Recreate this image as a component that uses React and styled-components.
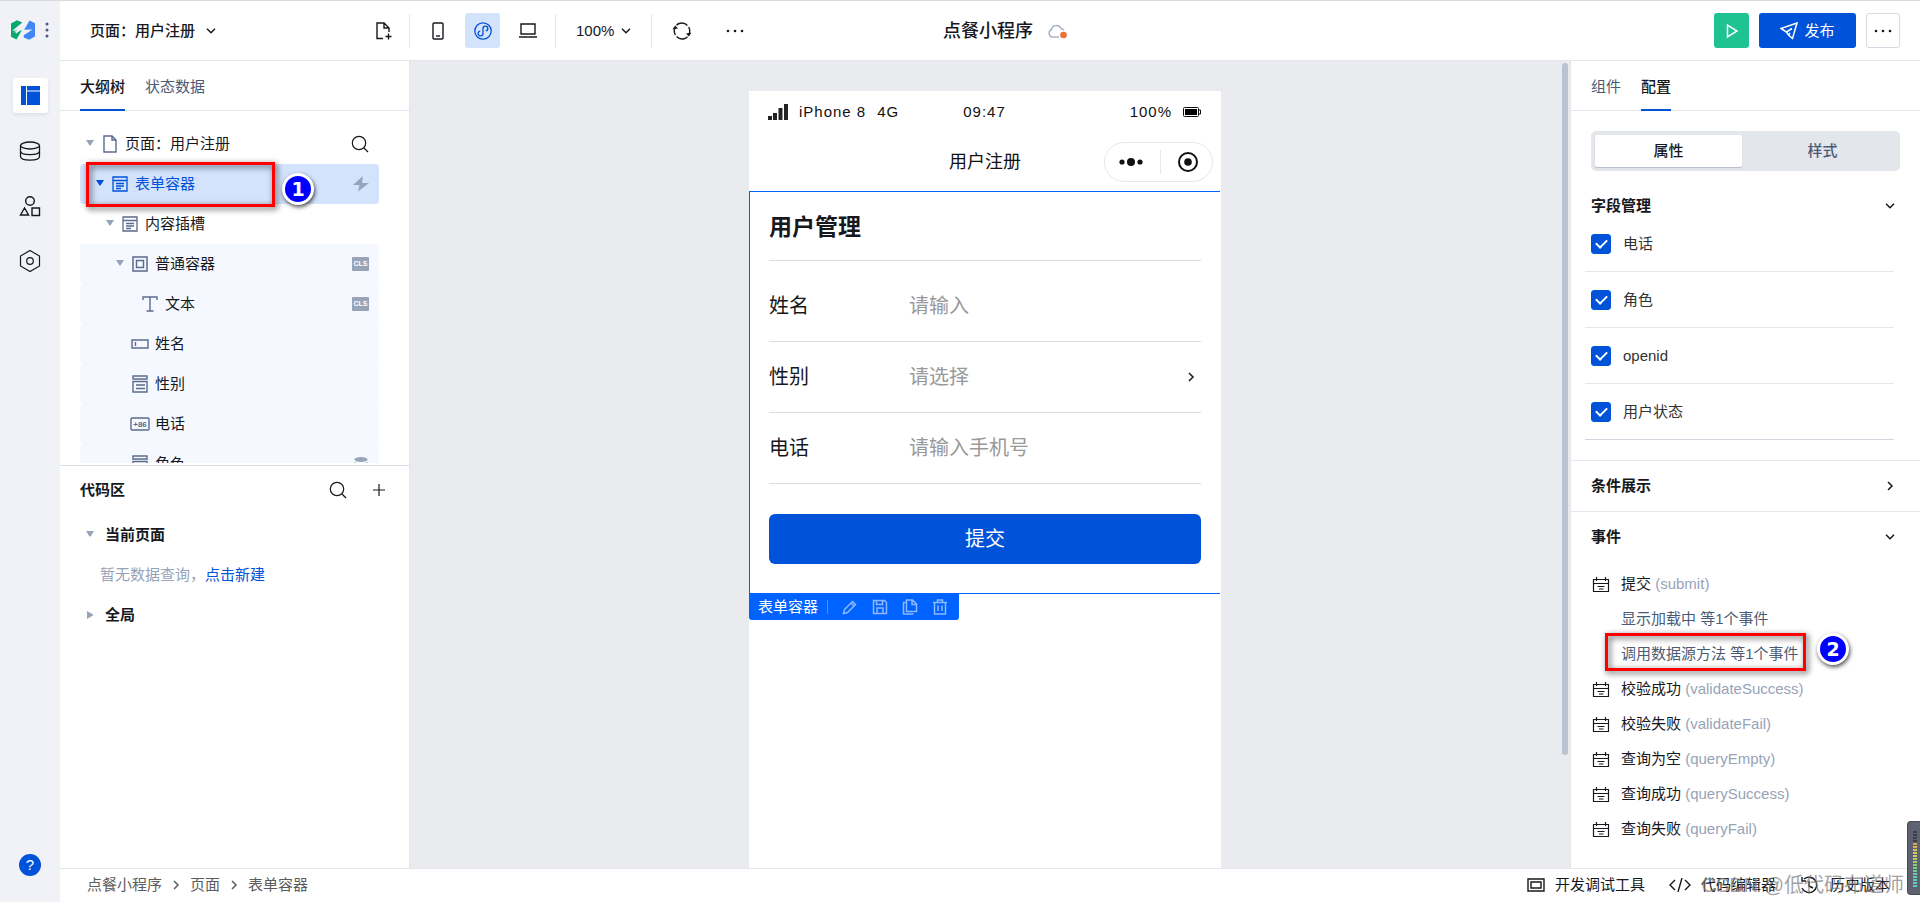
import React, { useState } from 'react';
import styled, { createGlobalStyle } from 'styled-components';

const GlobalStyle = createGlobalStyle`
  *, *::before, *::after {
    box-sizing: border-box;
  }
  body {
    margin: 0;
    font-family: "Liberation Sans", "Noto Sans CJK SC", sans-serif;
    font-size: 15px;
    line-height: 20px;
    color: #16181d;
  }
  button, input, select {
    font: inherit;
    color: inherit;
    margin: 0;
    padding: 0;
    border: none;
    background: none;
    outline: none;
  }
  button, select {
    cursor: pointer;
  }
  svg {
    display: block;
    flex: none;
  }
`;

const Shell = styled.div`
  display: flex;
  height: 100vh;
  border-top: 1px solid #dadbdd;
  background: #fff;
  overflow: hidden;
`;

const Rail = styled.nav`
  display: flex;
  flex-direction: column;
  align-items: center;
  gap: 20px;
  flex: none;
  width: 60px;
  padding-bottom: 26px;
  background: #f0f2f7;
`;

const Brand = styled.div`
  display: flex;
  align-items: center;
  justify-content: center;
  gap: 10px;
  width: 100%;
  height: 57px;
`;

const RailButton = styled.button`
  display: flex;
  align-items: center;
  justify-content: center;
  width: 35px;
  height: 35px;
  border-radius: 3px;
  background: ${props => props.$active ? '#fff' : 'transparent'};
  box-shadow: ${props => props.$active ? '0 2px 4px rgba(0, 0, 0, .08)' : 'none'};
`;

const HelpButton = styled.button`
  width: 22px;
  height: 22px;
  margin-top: auto;
  border-radius: 50%;
  background: #0052d9;
  color: #fff;
`;

const Workspace = styled.div`
  display: flex;
  flex-direction: column;
  flex: 1;
  min-width: 0;
`;

const TopBar = styled.header`
  display: grid;
  grid-template-columns: 1fr auto 1fr;
  align-items: center;
  height: 60px;
  flex: none;
  border-bottom: 1px solid #e3e6eb;
`;

const TopLeft = styled.div`
  display: flex;
  align-items: center;
  height: 34px;
`;

const PageSwitch = styled.label`
  display: flex;
  align-items: center;
  gap: 10px;
  width: 349px;
  padding: 0 17px 0 30px;
  font-weight: 500;
`;

const BareSelect = styled.select`
  appearance: none;
`;

const Spacer = styled.span`
  flex: 1;
`;

const ToolGroup = styled.div`
  display: flex;
  align-items: center;
  gap: ${props => props.$gap || 10}px;
  height: 34px;
  padding: 0 ${props => props.$pad}px;
  border-left: 1px solid #e3e6eb;
`;

const ToolButton = styled.button`
  display: flex;
  align-items: center;
  justify-content: center;
  width: 35px;
  height: 35px;
  border-radius: 3px;
  color: ${props => props.$active ? '#0052d9' : '#16181d'};
  background: ${props => props.$active ? '#d4e3fc' : 'transparent'};
`;

const ZoomSelect = styled.label`
  display: flex;
  align-items: center;
  gap: 6px;
`;

const AppTitle = styled.div`
  display: flex;
  align-items: center;
  gap: 14px;
  padding-left: 30px;
  font-size: 18px;
  font-weight: 500;
`;

const TopRight = styled.div`
  display: flex;
  align-items: center;
  justify-content: flex-end;
  gap: 10px;
  padding-right: 20px;
`;

const RunButton = styled(ToolButton)`
  background: #1fc391;
  color: #fff;
`;

const PublishButton = styled(ToolButton)`
  width: 97px;
  gap: 6px;
  background: #0052d9;
  color: #fff;
`;

const MoreButton = styled(ToolButton)`
  width: 34px;
  border: 1px solid #d5d9e4;
`;

const Body = styled.main`
  display: flex;
  flex: 1;
  min-height: 0;
`;

const LeftPanel = styled.aside`
  display: flex;
  flex-direction: column;
  flex: none;
  width: 350px;
  border-right: 1px solid #e3e6eb;
`;

const PanelHalf = styled.section`
  display: flex;
  flex-direction: column;
  flex: 1 1 0;
  min-height: 0;
  overflow: hidden;
  & + & {
    margin-top: 1px;
    border-top: 1px solid #d9dde6;
  }
`;

const Tabs = styled.div`
  display: flex;
  flex: none;
  gap: 20px;
  height: 50px;
  padding: 0 20px;
  border-bottom: 1px solid #e3e6eb;
`;

const Tab = styled.button`
  height: 50px;
  padding-top: 4px;
  border-bottom: 2px solid ${props => props.$active ? '#0052d9' : 'transparent'};
  color: ${props => props.$active ? '#16181d' : '#4b5b76'};
  font-weight: ${props => props.$active ? 500 : 400};
`;

const TreeList = styled.ul`
  flex: 1;
  min-height: 0;
  list-style: none;
  margin: 13px 30px 1px 20px;
  padding: 0;
  overflow: hidden;
`;

const TreeRow = styled.li`
  position: relative;
  display: flex;
  align-items: center;
  height: 40px;
  padding-right: 10px;
  padding-left: ${props => 2 + props.$level * 10}px;
  border-radius: 4px;
  color: ${props => props.$selected ? '#0052d9' : '#16181d'};
  background: ${props => props.$selected ? '#d4e3fc' : props.$nested ? '#f5f8ff' : 'transparent'};
`;

const TreeLabel = styled.button`
  display: flex;
  align-items: center;
  flex: 1;
  height: 40px;
  text-align: left;
`;

const Caret = styled.span`
  display: flex;
  justify-content: center;
  width: 16px;
  color: ${props => props.$selected ? '#0052d9' : '#97a3b7'};
`;

const IconSlot = styled.span`
  display: flex;
  justify-content: center;
  width: 20px;
  margin: 0 5px 0 2px;
  color: ${props => props.$selected ? '#0052d9' : '#5a6b8c'};
`;

const ClsTag = styled.span`
  width: 17px;
  height: 14px;
  border-radius: 1px;
  background: #97a3b7;
  color: #fff;
  font-size: 7px;
  font-weight: bold;
  line-height: 14px;
  text-align: center;
`;

const CodeHead = styled.div`
  display: flex;
  align-items: center;
  gap: 24px;
  height: 49px;
  padding: 0 22px 0 20px;
`;

const SectionTitle = styled.h2`
  flex: 1;
  margin: 0;
  font-size: 15px;
  font-weight: 600;
`;

const IconButton = styled.button`
  display: flex;
  align-items: center;
  justify-content: center;
`;

const CodeRow = styled.button`
  display: flex;
  align-items: center;
  gap: 7px;
  height: 40px;
  padding-left: 22px;
  font-weight: 600;
`;

const EmptyHint = styled.p`
  margin: 0;
  padding-left: 40px;
  line-height: 40px;
  color: #97a3b7;
  a {
    color: #0052d9;
    text-decoration: none;
  }
`;

const Canvas = styled.section`
  display: flex;
  flex: 1;
  min-width: 0;
  background: #eaebef;
`;

const Stage = styled.div`
  display: flex;
  justify-content: center;
  flex: 1;
  padding-top: 30px;
`;

const ScrollBar = styled.div`
  width: 10px;
  padding: 2px 2px 0;
  &::before {
    content: "";
    display: block;
    height: 86%;
    border-radius: 3px;
    background: #bcc3d0;
  }
`;

const Phone = styled.div`
  width: 472px;
  background: #fff;
`;

const StatusBar = styled.div`
  display: grid;
  grid-template-columns: 1fr auto 1fr;
  align-items: center;
  height: 42px;
  padding: 0 20px 0 19px;
  letter-spacing: 1px;
  color: #111;
`;

const StatusSide = styled.div`
  display: flex;
  align-items: center;
  justify-content: ${props => props.$end ? 'flex-end' : 'flex-start'};
  gap: 11px;
`;

const NavBar = styled.div`
  display: grid;
  grid-template-columns: 1fr auto 1fr;
  align-items: center;
  height: 58px;
  padding: 0 8px;
  font-size: 18px;
  color: #111;
`;

const Capsule = styled.div`
  grid-column: 3;
  justify-self: end;
  display: flex;
  align-items: center;
  justify-content: space-between;
  width: 109px;
  height: 40px;
  padding: 0 14px;
  border: 1px solid #e6e6ec;
  border-radius: 20px;
  color: #111;
`;

const CapsuleLine = styled.span`
  width: 1px;
  height: 24px;
  background: #e6e6ec;
`;

const NavTitle = styled.span`
  grid-column: 2;
`;

const FormBox = styled.form`
  position: relative;
  padding: 0 19px 29px;
  margin-right: 1px;
  border: 1px solid #0062ff;
  border-right: none;
`;

const FormTitle = styled.h1`
  margin: 0 0 10px;
  height: 69px;
  border-bottom: 1px solid #dcdcdc;
  font-size: 23px;
  font-weight: 700;
  line-height: 70px;
`;

const Field = styled.div`
  display: flex;
  align-items: center;
  height: 71px;
  border-bottom: 1px solid #dcdcdc;
  font-size: 20px;
  label {
    width: 140px;
  }
`;

const FieldInput = styled.input`
  flex: 1;
  min-width: 0;
  height: 40px;
  &::placeholder {
    color: #999;
    opacity: 1;
  }
`;

const FieldSelect = styled.select`
  appearance: none;
  flex: 1;
  height: 40px;
  color: #999;
`;

const SubmitButton = styled.button`
  display: block;
  width: 100%;
  height: 50px;
  margin-top: 30px;
  border-radius: 6px;
  background: #0052d9;
  color: #fff;
  font-size: 20px;
`;

const WidgetBar = styled.div`
  position: absolute;
  top: 100%;
  left: -1px;
  display: flex;
  align-items: center;
  gap: 14px;
  height: 27px;
  padding: 0 11px 0 9px;
  border-radius: 0 0 3px 3px;
  background: #0062ff;
  color: #fff;
`;

const WidgetName = styled.span`
  padding-right: 9px;
  border-right: 1px solid #4d91ff;
  line-height: 14px;
`;

const WidgetAction = styled.button`
  width: 16px;
  height: 16px;
  color: #8cb9ff;
`;

const RightPanel = styled.aside`
  flex: none;
  width: 350px;
  border-left: 1px solid #e3e6eb;
  overflow: hidden;
`;

const Segmented = styled.div`
  display: grid;
  grid-template-columns: 1fr 1fr;
  gap: 7px;
  margin: 20px 20px 10px;
  padding: 4px;
  border-radius: 5px;
  background: #e3e6eb;
`;

const Segment = styled.button`
  height: 32px;
  border-radius: 2px;
  color: ${props => props.$active ? '#16181d' : '#4b5b76'};
  background: ${props => props.$active ? '#fff' : 'transparent'};
  box-shadow: ${props => props.$active ? '0 1px 1px #b4bccb' : 'none'};
  font-weight: 500;
`;

const Group = styled.section`
  & + & {
    border-top: 1px solid #e3e6eb;
  }
`;

const GroupHead = styled.button`
  display: flex;
  align-items: center;
  justify-content: space-between;
  width: 100%;
  height: 50px;
  padding: 0 25px 0 20px;
  font-weight: 600;
`;

const FieldChecks = styled.div`
  margin: 3px 26px 20px 14px;
`;

const CheckRow = styled.label`
  display: flex;
  align-items: center;
  gap: 12px;
  height: 56px;
  padding-left: 6px;
  border-bottom: 1px solid #e3e6eb;
  color: #333;
  &:first-child {
    height: 38px;
    align-items: flex-start;
  }
  &:last-child {
    border-bottom-color: #d0d6e0;
  }
`;

const CheckBox = styled.input`
  appearance: none;
  position: relative;
  flex: none;
  width: 20px;
  height: 20px;
  border: 1px solid #0052d9;
  border-radius: 3px;
  &:checked {
    background: #0052d9;
  }
  &:checked::after {
    content: "";
    position: absolute;
    top: 2px;
    left: 6px;
    width: 7px;
    height: 11px;
    border: solid #fff;
    border-width: 0 2px 2px 0;
    transform: rotate(45deg);
  }
`;

const EventList = styled.ul`
  list-style: none;
  margin: 0;
  padding: 4px 20px 0;
`;

const EventRow = styled.li`
  display: flex;
  align-items: center;
  gap: 10px;
  height: 35px;
  svg {
    margin-top: 2px;
  }
  em {
    font-style: normal;
    color: #97a3b7;
  }
`;

const ActionRow = styled.li`
  display: flex;
  align-items: center;
  height: 35px;
  padding-left: 30px;
`;

const ActionLink = styled.button`
  position: relative;
  color: #4b5b76;
`;

const Mark = styled.span`
  position: absolute;
  top: ${props => props.$top}px;
  left: ${props => props.$left}px;
  width: ${props => props.$width}px;
  height: ${props => props.$height}px;
  border: 3px solid #f00;
  filter: drop-shadow(2px 2px 3px rgba(0, 0, 0, .7));
  pointer-events: none;
`;

const MarkNumber = styled.span`
  position: absolute;
  top: ${props => props.$top}px;
  left: ${props => props.$left}px;
  width: 32px;
  height: 32px;
  border: 3px solid #fff;
  border-radius: 50%;
  background: #00f;
  box-shadow: 1px 2px 4px rgba(0, 0, 0, .7);
  color: #fff;
  font-family: "DejaVu Sans", sans-serif;
  font-size: 19px;
  font-weight: bold;
  line-height: 26px;
  text-align: center;
  pointer-events: none;
`;

const Footer = styled.footer`
  position: relative;
  display: flex;
  align-items: center;
  justify-content: space-between;
  flex: none;
  height: 34px;
  padding: 0 30px 2px 27px;
  border-top: 1px solid #e3e6eb;
`;

const Crumbs = styled.nav`
  display: flex;
  align-items: center;
  gap: 9px;
  color: #5c5c5c;
  a {
    color: inherit;
    text-decoration: none;
  }
`;

const FooterTools = styled.div`
  display: flex;
  gap: 24px;
`;

const FooterButton = styled.button`
  display: flex;
  align-items: center;
  gap: ${props => props.$gap || 10}px;
`;

const Watermark = styled.span`
  position: absolute;
  right: 16px;
  bottom: 5px;
  font-size: 20px;
  line-height: 24px;
  color: rgba(120, 120, 120, .7);
  pointer-events: none;
`;

const Meter = styled.div`
  position: fixed;
  right: 0;
  bottom: 7px;
  width: 13px;
  height: 74px;
  padding: 9px 3px 0 5px;
  border: 1px solid #484b58;
  border-right: none;
  border-radius: 4px 0 0 4px;
  background: #5e6170;
`;

const MeterTick = styled.i`
  display: block;
  height: 2px;
  margin-bottom: 1px;
  background: ${props => props.$color};
`;

const Icon = ({ size = 20, width, height, children, stroke = 1, fill = 'none' }) => (
  <svg width={width || size} height={height || size} viewBox={`0 0 ${width || size} ${height || size}`}
    fill={fill} stroke="currentColor" strokeWidth={stroke} aria-hidden="true">
    {children}
  </svg>
);

const ChevronDown = () => <Icon width={10} height={6} stroke={1.5}><path d="M1 .8 5 4.8 9 .8" /></Icon>;
const ChevronRight = () => <Icon width={10} height={10} stroke={1.5}><path d="M3 1 7 5 3 9" /></Icon>;
const Search = () => <Icon size={18} stroke={1.2}><circle cx="8" cy="8" r="6.7" /><path d="m13 13 4 4" /></Icon>;
const Dots = () => (
  <Icon width={18} height={4}>
    <g fill="currentColor" stroke="none"><circle cx="2" cy="2" r="1.3" /><circle cx="9" cy="2" r="1.3" /><circle cx="16" cy="2" r="1.3" /></g>
  </Icon>
);
const ArrowDown = () => <Icon width={8} height={8}><path d="M0 0h8L4.5 5.5h-1z" fill="currentColor" stroke="none" /></Icon>;
const ArrowRight = () => <Icon width={8} height={8}><path d="M1 0v8L7 4.5v-1z" fill="currentColor" stroke="none" /></Icon>;

const Logo = () => (
  <svg width="24" height="20" viewBox="0 0 24 20" aria-hidden="true">
    <path d="M0 3.500 6 .3 11.300 2.500 2.500 9.800 1 10.800 10.800 10.200 5.500 19.600 0 16.700z" fill="#07a870" />
    <path d="M24 16.500 18 19.700 12.700 17.500 12.700 15.200 21.500 9.500 13.200 9.800 18.500 .4 24 3.300z" fill="#4286f5" />
    <path d="M2 12.500 10 8.500 9.500 10.500 5 13.500 4.500 12z" fill="#f0f2f7" />
  </svg>
);

const treeIcons = {
  file: <Icon width={14} height={18} stroke={1.4}><path d="M1 1h8l4 4v12H1zM9 1v4h4" /></Icon>,
  form: <Icon size={16} stroke={1.3}><path d="M1 1h14v14H1zM1 4.500h14M4 7.500h8M4 10h8M4 12.500h5" /></Icon>,
  box: <Icon size={16} stroke={1.5}><path d="M1 1h14v14H1zM4.500 4.500h7v7h-7z" /></Icon>,
  text: <Icon size={16} stroke={1.4}><path d="M1 4V1h14v3M8 1v14M4.500 15h7" /></Icon>,
  input: <Icon width={18} height={10} stroke={1.4}><path d="M1 1h16v8H1zM4.500 3v4" /></Icon>,
  select: <Icon width={16} height={18} stroke={1.4}><path d="M1 1h14v3H1zM1 6.500h14v10.500H1zM4 10h9M4 13.500h9" /></Icon>,
  phone: (
    <Icon width={20} height={14} stroke={1.4}>
      <rect x="1" y="1" width="18" height="12" rx="1" />
      <text x="10" y="10" fontSize="8" fontWeight="bold" textAnchor="middle" fill="currentColor" stroke="none">+86</text>
    </Icon>
  )
};

const Bolt = () => <Icon size={16}><path d="M10 0 0 9h6.500l-1.500 6.500L16 7H9z" fill="#97a3b7" stroke="none" /></Icon>;
const Disk = () => (
  <Icon size={16}><g fill="#97a3b7" stroke="none"><ellipse cx="8" cy="3.500" rx="6.500" ry="2.500" /><path d="M1.500 6v7c3 3 10 3 13 0V6c-3 2-10 2-13 0z" /></g></Icon>
);

// lines sit on half pixels so the small glyph stays crisp
const EventIcon = () => (
  <Icon width={20} height={16}><path d="M2.500 2.500h15v12h-15zM2.500 6.500h15M5.500 0v4M14.500 0v4M6.500 9.500h7M8 12h4.500" strokeWidth="1.200" /></Icon>
);

const tree = [
  { label: '页面：用户注册', level: 0, open: true, icon: 'file', end: 'search' },
  { label: '表单容器', level: 1, open: true, icon: 'form', end: 'bolt', selected: true },
  { label: '内容插槽', level: 2, open: true, icon: 'form' },
  { label: '普通容器', level: 3, open: true, icon: 'box', end: 'cls', nested: true },
  { label: '文本', level: 4, icon: 'text', end: 'cls', nested: true },
  { label: '姓名', level: 3, icon: 'input', nested: true },
  { label: '性别', level: 3, icon: 'select', nested: true },
  { label: '电话', level: 3, icon: 'phone', nested: true },
  { label: '角色', level: 3, icon: 'select', end: 'disk', nested: true }
];

const rowEnds = {
  search: <IconButton aria-label="搜索"><Search /></IconButton>,
  bolt: <Bolt />,
  cls: <ClsTag>CLS</ClsTag>,
  disk: <Disk />
};

const events = [
  { label: '提交', name: 'submit', actions: ['显示加载中 等1个事件', '调用数据源方法 等1个事件'] },
  { label: '校验成功', name: 'validateSuccess' },
  { label: '校验失败', name: 'validateFail' },
  { label: '查询为空', name: 'queryEmpty' },
  { label: '查询成功', name: 'querySuccess' },
  { label: '查询失败', name: 'queryFail' }
];

const meterColors = [
  '#3b3d48', '#3b3d48', '#3b3d48', '#3b3d48', '#d9a05c', '#dcae5c', '#dcc05c', '#d6c95c', '#c8cc60', '#b5cc66',
  '#9fca6c', '#8fca78', '#7fc987', '#74c996', '#6bcaa5', '#66cab0', '#62cab8', '#5fcabc', '#5fcabc'
];

const SideRail = () => (
  <Rail>
    <Brand>
      <Logo />
      <Icon width={4} height={16}><g fill="#4b5b76" stroke="none"><circle cx="2" cy="2" r="1.500" /><circle cx="2" cy="8" r="1.500" /><circle cx="2" cy="14" r="1.500" /></g></Icon>
    </Brand>
    <RailButton $active aria-label="页面">
      <Icon size={19}><path d="M0 0h5v19H0zM6 0h13v4.500H6zM6 5.500h13V19H6z" fill="#0052d9" stroke="none" /></Icon>
    </RailButton>
    <RailButton aria-label="数据源">
      <Icon width={22} height={20} stroke={1.300}>
        <ellipse cx="11" cy="4.500" rx="9.500" ry="3.500" />
        <path d="M1.500 4.500v11c0 4.700 19 4.700 19 0v-11M1.500 10c0 4.700 19 4.700 19 0" />
      </Icon>
    </RailButton>
    <RailButton aria-label="组件">
      <Icon width={22} height={22} stroke={1.400}>
        <circle cx="11" cy="6" r="4.300" /><path d="M5.500 13 1.500 20h8zM13 13h7.500v7.500H13z" />
      </Icon>
    </RailButton>
    <RailButton aria-label="设置">
      <Icon width={22} height={24} stroke={1.200}>
        <path d="M11 1.500 20.500 7v10L11 22.500 1.500 17V7z" /><circle cx="11" cy="12" r="3.300" />
      </Icon>
    </RailButton>
    <HelpButton aria-label="帮助">?</HelpButton>
  </Rail>
);

const Header = () => (
  <TopBar>
    <TopLeft>
      <PageSwitch>
        <BareSelect aria-label="页面"><option>页面：用户注册</option></BareSelect>
        <ChevronDown />
        <Spacer />
        <IconButton aria-label="新建页面">
          <Icon width={16} height={18} stroke={1.400}><path d="M7 16.500H1V1h7l5 5v4M8 1v5h5M12.500 11.500v6M9.500 14.500h6" /></Icon>
        </IconButton>
      </PageSwitch>
      <ToolGroup $pad={10}>
        <ToolButton aria-label="手机">
          <Icon width={12} height={18} stroke={1.400}><rect x="1" y="1" width="10" height="16" rx="1" /><path d="M4 14h4" /></Icon>
        </ToolButton>
        <ToolButton $active aria-label="小程序">
          <Icon size={18} stroke={1.300}>
            <circle cx="9" cy="9" r="8.200" />
            <path d="M9 6.500v5a2.400 2.400 0 1 1-2.800-2.400M9 11.500v-5a2.400 2.400 0 1 1 2.800 2.400" />
          </Icon>
        </ToolButton>
        <ToolButton aria-label="电脑">
          <Icon width={18} height={15} stroke={1.400}><path d="M2 1h14v10H2zM0 14h18" /></Icon>
        </ToolButton>
      </ToolGroup>
      <ToolGroup $pad={20}>
        <ZoomSelect>
          <BareSelect aria-label="缩放"><option>100%</option></BareSelect>
          <ChevronDown />
        </ZoomSelect>
      </ToolGroup>
      <ToolGroup $pad={12} $gap={18}>
        <ToolButton aria-label="刷新">
          <Icon size={20} stroke={1.400}>
            <path d="M7 2.500a8 8 0 0 1 10 10.800M15.500 15.800a8 8 0 0 1-3 1.800M13 17.500A8 8 0 0 1 3 6.700M4.500 4.200A8 8 0 0 1 7 2.500" strokeDasharray="9 2" />
            <path d="m.5 8.200 2.700-3.700L6 7.500zM19.500 11.800l-2.700 3.700L14 12.500z" fill="currentColor" stroke="none" />
          </Icon>
        </ToolButton>
        <ToolButton aria-label="更多"><Dots /></ToolButton>
      </ToolGroup>
    </TopLeft>
    <AppTitle>
      点餐小程序
      <Icon size={20}>
        <path d="M12 16H5a4 4 0 0 1-.5-7.500 5 5 0 0 1 9.500-1 4 4 0 0 1 3 2" stroke="#a9b3c7" strokeWidth="1.500" />
        <circle cx="16.500" cy="14" r="3.300" fill="#ed7133" stroke="none" />
      </Icon>
    </AppTitle>
    <TopRight>
      <RunButton aria-label="运行"><Icon width={12} height={16} stroke={1.500}><path d="M1.500 2v12L11 8z" /></Icon></RunButton>
      <PublishButton>
        <Icon size={18} stroke={1.500}><path d="M1 6.500 17 1l-4.500 15.500L8.500 13l-2-3zM6.500 10 12 6.500M8.500 13l1.500-2" /></Icon>
        发布
      </PublishButton>
      <MoreButton aria-label="更多操作"><Dots /></MoreButton>
    </TopRight>
  </TopBar>
);

const Outline = () => (
  <LeftPanel>
    <PanelHalf>
      <Tabs>
        <Tab $active>大纲树</Tab>
        <Tab>状态数据</Tab>
      </Tabs>
      <TreeList>
        {tree.map((node, index) => (
          <TreeRow key={index} $level={node.level} $selected={node.selected} $nested={node.nested}>
            <TreeLabel>
              <Caret $selected={node.selected}>{node.open && <ArrowDown />}</Caret>
              <IconSlot $selected={node.selected}>{treeIcons[node.icon]}</IconSlot>
              {node.label}
            </TreeLabel>
            {rowEnds[node.end]}
            {node.selected && <Mark $top={-2} $left={6} $width={189} $height={45} />}
            {node.selected && <MarkNumber $top={9} $left={202}>1</MarkNumber>}
          </TreeRow>
        ))}
      </TreeList>
    </PanelHalf>
    <PanelHalf>
      <CodeHead>
        <SectionTitle>代码区</SectionTitle>
        <IconButton aria-label="搜索"><Search /></IconButton>
        <IconButton aria-label="新建"><Icon size={16} stroke={1.200}><path d="M8 2v12M2 8h12" /></Icon></IconButton>
      </CodeHead>
      <CodeRow><Caret><ArrowDown /></Caret>当前页面</CodeRow>
      <EmptyHint>暂无数据查询，<a href="#new">点击新建</a></EmptyHint>
      <CodeRow><Caret><ArrowRight /></Caret>全局</CodeRow>
    </PanelHalf>
  </LeftPanel>
);

const Preview = () => (
  <Canvas>
    <Stage>
      <Phone>
        <StatusBar>
          <StatusSide>
            <Icon width={20} height={16}><path d="M0 12h4v4H0zM5 9h4v7H5zM10.500 4h4v12h-4zM16 0h4v16h-4z" fill="#222" stroke="none" /></Icon>
            <span>iPhone 8</span>
            <span>4G</span>
          </StatusSide>
          <span>09:47</span>
          <StatusSide $end>
            <span>100%</span>
            <Icon width={18} height={10}><rect x=".5" y=".5" width="15" height="9" rx="1" /><path d="M2 2h12v6H2z" fill="#000" stroke="none" /><path d="M16 3h1.500v4H16" /></Icon>
          </StatusSide>
        </StatusBar>
        <NavBar>
          <NavTitle>用户注册</NavTitle>
          <Capsule>
            <Icon width={24} height={8}><g fill="currentColor" stroke="none"><circle cx="3" cy="4" r="2.600" /><circle cx="12" cy="4" r="4" /><circle cx="21" cy="4" r="2.600" /></g></Icon>
            <CapsuleLine />
            <Icon size={20} stroke={2}><circle cx="10" cy="10" r="9" /><circle cx="10" cy="10" r="3.800" fill="currentColor" stroke="none" /></Icon>
          </Capsule>
        </NavBar>
        <FormBox onSubmit={e => e.preventDefault()}>
          <FormTitle>用户管理</FormTitle>
          <Field>
            <label htmlFor="name">姓名</label>
            <FieldInput id="name" placeholder="请输入" />
          </Field>
          <Field>
            <label htmlFor="gender">性别</label>
            <FieldSelect id="gender"><option>请选择</option></FieldSelect>
            <Icon width={14} height={10} stroke={1.500}><path d="M2 1 6 5 2 9" /></Icon>
          </Field>
          <Field>
            <label htmlFor="tel">电话</label>
            <FieldInput id="tel" placeholder="请输入手机号" />
          </Field>
          <SubmitButton type="submit">提交</SubmitButton>
          <WidgetBar>
            <WidgetName>表单容器</WidgetName>
            <WidgetAction type="button" aria-label="编辑"><Icon size={16} stroke={1.500}><path d="m2.500 10.500 8-8 3 3-8 8-4 1zM9 4l3 3" /></Icon></WidgetAction>
            <WidgetAction type="button" aria-label="保存"><Icon size={16} stroke={1.500}><path d="M1.500 1.500h11l2 2v11h-13zM4.500 1.500v4h6v-4M5 14.500V9h6v5.500" /></Icon></WidgetAction>
            <WidgetAction type="button" aria-label="复制"><Icon size={16} stroke={1.500}><path d="M4.500 1h6l4 4v7.500h-10zM10 1v4.500h4.500M4.500 3.500h-3V15h10" /></Icon></WidgetAction>
            <WidgetAction type="button" aria-label="删除"><Icon size={16} stroke={1.500}><path d="M1 3.500h14M5.500 3V1h5v2M2.500 3.500V15h11V3.500M6 6.500v5.500M10 6.500v5.500" /></Icon></WidgetAction>
          </WidgetBar>
        </FormBox>
      </Phone>
    </Stage>
    <ScrollBar />
  </Canvas>
);

const Config = () => {
  const [checked, setChecked] = useState({ '电话': true, '角色': true, 'openid': true, '用户状态': true });
  return (
    <RightPanel>
      <Tabs>
        <Tab>组件</Tab>
        <Tab $active>配置</Tab>
      </Tabs>
      <Segmented>
        <Segment $active>属性</Segment>
        <Segment>样式</Segment>
      </Segmented>
      <Group>
        <GroupHead>字段管理<ChevronDown /></GroupHead>
        <FieldChecks>
          {Object.keys(checked).map(name => (
            <CheckRow key={name}>
              <CheckBox type="checkbox" checked={checked[name]}
                onChange={() => setChecked({ ...checked, [name]: !checked[name] })} />
              {name}
            </CheckRow>
          ))}
        </FieldChecks>
      </Group>
      <Group>
        <GroupHead>条件展示<ChevronRight /></GroupHead>
      </Group>
      <Group>
        <GroupHead>事件<ChevronDown /></GroupHead>
        <EventList>
          {events.map(event => (
            <React.Fragment key={event.name}>
              <EventRow><EventIcon /><span>{event.label} <em>({event.name})</em></span></EventRow>
              {(event.actions || []).map((action, index) => (
                <ActionRow key={action}>
                  <ActionLink>
                    {action}
                    {index === 1 && <Mark $top={-11} $left={-16} $width={201} $height={38} />}
                    {index === 1 && <MarkNumber $top={-11} $left={196}>2</MarkNumber>}
                  </ActionLink>
                </ActionRow>
              ))}
            </React.Fragment>
          ))}
        </EventList>
      </Group>
    </RightPanel>
  );
};

const BottomBar = () => (
  <Footer>
    <Crumbs>
      <a href="#app">点餐小程序</a>
      <ChevronRight />
      <a href="#page">页面</a>
      <ChevronRight />
      <a href="#form">表单容器</a>
    </Crumbs>
    <FooterTools>
      <FooterButton>
        <Icon width={18} height={14} stroke={1.400}><path d="M1 1h16v12H1zM4 4h10v6H4z" /></Icon>
        开发调试工具
      </FooterButton>
      <FooterButton>
        <Icon width={22} height={14} stroke={1.400}><path d="M6 2 1 7l5 5M16 2l5 5-5 5M13 0 9 14" /></Icon>
        代码编辑器
      </FooterButton>
      <FooterButton $gap={12}>
        <Icon size={18} stroke={1.400}><path d="M4 3a7.700 7.700 0 1 1-2 9M2 1v4h4M9 5v5l4 2" /></Icon>
        历史版本
      </FooterButton>
    </FooterTools>
    <Watermark>CSDN @低代码布道师</Watermark>
  </Footer>
);

const App = () => (
  <>
    <GlobalStyle />
    <Shell>
      <SideRail />
      <Workspace>
        <Header />
        <Body>
          <Outline />
          <Preview />
          <Config />
        </Body>
        <BottomBar />
      </Workspace>
      <Meter>
        {meterColors.map((color, index) => <MeterTick key={index} $color={color} />)}
      </Meter>
    </Shell>
  </>
);

export default App;
